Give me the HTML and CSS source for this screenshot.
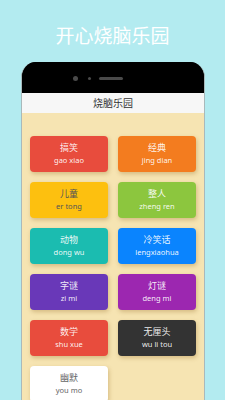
FILE: index.html
```html
<!DOCTYPE html>
<html lang="zh">
<head>
<meta charset="utf-8">
<title>开心烧脑乐园</title>
<link rel="stylesheet" href="styles.css">
</head>
<body>
<div class="screen">
  <h1 class="title">开心烧脑乐园</h1>
  <div class="phone">
    <div class="bezel">
      <span class="cam"></span>
      <span class="sensor"></span>
      <span class="speaker"></span>
    </div>
    <div class="appbar">烧脑乐园</div>
    <div class="content">
      <div class="grid">
        <div class="card red"><span class="zh">搞笑</span><span class="py">gao xiao</span></div>
        <div class="card orange"><span class="zh">经典</span><span class="py">jing dian</span></div>
        <div class="card yellow"><span class="zh">儿童</span><span class="py">er tong</span></div>
        <div class="card green"><span class="zh">整人</span><span class="py">zheng ren</span></div>
        <div class="card teal"><span class="zh">动物</span><span class="py">dong wu</span></div>
        <div class="card blue"><span class="zh">冷笑话</span><span class="py">lengxiaohua</span></div>
        <div class="card purple"><span class="zh">字谜</span><span class="py">zi mi</span></div>
        <div class="card magenta"><span class="zh">灯谜</span><span class="py">deng mi</span></div>
        <div class="card red"><span class="zh">数学</span><span class="py">shu xue</span></div>
        <div class="card dark"><span class="zh">无厘头</span><span class="py">wu li tou</span></div>
        <div class="card white"><span class="zh">幽默</span><span class="py">you mo</span></div>
      </div>
    </div>
  </div>
</div>
</body>
</html>
```

FILE: styles.css
```css
html, body {
  margin: 0;
  padding: 0;
  background: #b3ebf0;
}
.screen {
  width: 225px;
  height: 400px;
  overflow: hidden;
  background: #b3ebf0;
  font-family: "Noto Sans CJK SC", "Noto Sans", sans-serif;
}
.title {
  margin: 0;
  padding-top: 25px;
  height: 42px;
  box-sizing: border-box;
  text-align: center;
  color: #ffffff;
  font-size: 19px;
  font-weight: 400;
  line-height: 20px;
  letter-spacing: 0;
}
.phone {
  margin-left: 21px;
  margin-top: 20px;
  width: 184px;
  height: 340px;
  box-sizing: border-box;
  border-left: 1px solid #a9b9bb;
  border-right: 1px solid #a9b9bb;
  border-radius: 15px 15px 0 0;
  background: #000;
  overflow: hidden;
  display: flex;
  flex-direction: column;
}
.bezel {
  height: 31px;
  flex: none;
  background: #000;
  display: flex;
  align-items: center;
  padding-left: 51px;
  padding-top: 2px;
  box-sizing: border-box;
}
.cam {
  width: 5px;
  height: 5px;
  border-radius: 50%;
  background: #4a4a4a;
}
.sensor {
  width: 3px;
  height: 3px;
  border-radius: 50%;
  background: #4a4a4a;
  margin-left: 10px;
}
.speaker {
  width: 24px;
  height: 3px;
  border-radius: 2px;
  background: #4a4a4a;
  margin-left: 8px;
}
.appbar {
  height: 20px;
  flex: none;
  background: #f7f7f7;
  color: #333;
  font-size: 10px;
  line-height: 20px;
  text-align: center;
}
.content {
  flex: 1;
  background: #f6e4b2;
  padding: 23px 8px 0 8px;
}
.grid {
  display: grid;
  grid-template-columns: 78px 78px;
  column-gap: 10px;
  row-gap: 10px;
}
.card {
  height: 36px;
  border-radius: 4px;
  display: flex;
  flex-direction: column;
  align-items: center;
  color: rgba(255, 255, 255, 0.92);
  box-shadow: 1px 2px 4px rgba(150, 110, 40, 0.35);
}
.zh {
  font-size: 9px;
  line-height: 11px;
  margin-top: 6px;
}
.py {
  font-family: "Noto Sans", "Roboto", sans-serif;
  font-size: 7.5px;
  line-height: 10px;
  margin-top: 2px;
}
.red { background: #e84c3d; }
.orange { background: #f37c1f; }
.yellow { background: #fdc00f; color: #555555; }
.green { background: #8cc63e; }
.teal { background: #1bbcb0; }
.blue { background: #0a84fe; }
.purple { background: #6938b8; }
.magenta { background: #9c27b0; }
.dark { background: #333333; }
.white { background: #ffffff; color: #666666; }
```
